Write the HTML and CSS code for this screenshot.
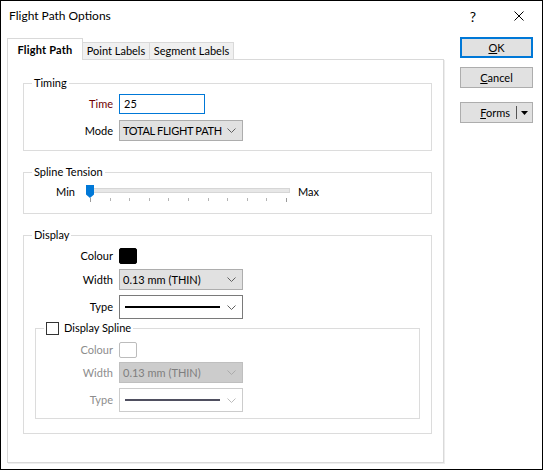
FILE: index.html
```html
<!DOCTYPE html>
<html>
<head>
<meta charset="utf-8">
<link rel="stylesheet" href="styles.css">
</head>
<body>
<div class="window">
  <div class="titlebar">
    <span class="title">Flight Path Options</span>
    <div class="caps">
      <span class="cap help">?</span>
      <span class="cap close"><svg width="10" height="10" viewBox="0 0 10 10"><path d="M0.5 0.5 L9.5 9.5 M9.5 0.5 L0.5 9.5" stroke="#000" stroke-width="1" fill="none"/></svg></span>
    </div>
  </div>
  <div class="body">
    <div class="main">
      <div class="tabs">
        <div class="tab active">Flight Path</div>
        <div class="tab t-point">Point Labels</div>
        <div class="tab t-seg">Segment Labels</div>
      </div>
      <div class="panel">
        <fieldset class="group timing">
          <legend>Timing</legend>
          <div class="form">
            <span class="lbl req">Time</span>
            <div class="textbox">25</div>
            <span class="lbl r-mode">Mode</span>
            <div class="combo r-mode"><span class="tight">TOTAL FLIGHT PATH</span><svg class="chev" width="9" height="5" viewBox="0 0 9 5"><polyline points="0.5,0.5 4.5,4.5 8.5,0.5" fill="none" stroke="#606060" stroke-width="1"/></svg></div>
          </div>
        </fieldset>

        <fieldset class="group spline-tension">
          <legend>Spline Tension</legend>
          <div class="slider-row">
            <span class="min">Min</span>
            <div class="slider">
              <div class="track"></div>
              <div class="ticks">
                <i class="tk tall"></i><i class="tk"></i><i class="tk"></i><i class="tk"></i><i class="tk"></i><i class="tk"></i><i class="tk"></i><i class="tk"></i><i class="tk"></i><i class="tk"></i><i class="tk tall"></i>
              </div>
              <svg class="thumb" width="8" height="13" viewBox="0 0 8 13"><path d="M0 0 H8 V9.5 L4 13 L0 9.5 Z" fill="#0078d7"/></svg>
            </div>
            <span class="max">Max</span>
          </div>
        </fieldset>

        <fieldset class="group display">
          <legend>Display</legend>
          <div class="form">
            <span class="lbl r-colour">Colour</span>
            <div class="r-colour cell"><span class="swatch"></span></div>
            <span class="lbl r-width">Width</span>
            <div class="combo r-width"><span>0.13 mm (THIN)</span><svg class="chev" width="9" height="5" viewBox="0 0 9 5"><polyline points="0.5,0.5 4.5,4.5 8.5,0.5" fill="none" stroke="#606060" stroke-width="1"/></svg></div>
            <span class="lbl r-type">Type</span>
            <div class="linecombo r-type"><span class="line"></span><svg class="chev" width="9" height="5" viewBox="0 0 9 5"><polyline points="0.5,0.5 4.5,4.5 8.5,0.5" fill="none" stroke="#606060" stroke-width="1"/></svg></div>
          </div>

          <fieldset class="group spline">
            <legend><span class="check"></span><span>Display Spline</span></legend>
            <div class="form sub">
              <span class="lbl dis r-colour2">Colour</span>
              <div class="r-colour2 cell"><span class="swatch off"></span></div>
              <span class="lbl dis r-width2">Width</span>
              <div class="combo off r-width2"><span>0.13 mm (THIN)</span><svg class="chev" width="9" height="5" viewBox="0 0 9 5"><polyline points="0.5,0.5 4.5,4.5 8.5,0.5" fill="none" stroke="#ababab" stroke-width="1"/></svg></div>
              <span class="lbl dis r-type2">Type</span>
              <div class="linecombo off r-type2"><span class="line"></span><svg class="chev" width="9" height="5" viewBox="0 0 9 5"><polyline points="0.5,0.5 4.5,4.5 8.5,0.5" fill="none" stroke="#bcbcbc" stroke-width="1"/></svg></div>
            </div>
          </fieldset>
        </fieldset>
      </div>
    </div>

    <div class="buttons">
      <div class="btn default"><span><u>O</u>K</span></div>
      <div class="btn cancel"><span><u>C</u>ancel</span></div>
      <div class="btn split">
        <span class="split-label"><u>F</u>orms</span>
        <span class="split-sep"></span>
        <span class="split-arrow"><svg width="7" height="4" viewBox="0 0 7 4"><path d="M0 0 H7 L3.5 4 Z" fill="#000"/></svg></span>
      </div>
    </div>
  </div>
</div>
</body>
</html>
```

FILE: styles.css
```css
html, body {
  margin: 0;
  padding: 0;
  background: #fff;
}

body {
  font-family: Lato, "Noto Sans", "Liberation Sans", sans-serif;
  font-size: 11px;
  line-height: 16px;
  color: #000;
}

.window {
  width: 543px;
  height: 470px;
  box-sizing: border-box;
  border: 1px solid #000;
  background: #fff;
  display: flex;
  flex-direction: column;
}

/* title bar */
.titlebar {
  height: 30px;
  flex-shrink: 0;
  display: flex;
  align-items: center;
}

.title {
  flex: 1;
  padding-left: 8px;
  font-size: 12px;
  line-height: 16px;
}

.caps {
  display: flex;
  height: 100%;
}

.cap {
  width: 46px;
  height: 100%;
  display: flex;
  align-items: center;
  justify-content: center;
}

.help {
  font-size: 14px;
  padding-top: 1px;
  box-sizing: border-box;
}

/* body layout */
.body {
  flex: 1;
  display: flex;
  padding: 0 9px 0 6px;
}

.main {
  width: 437px;
  margin-top: 7px;
  display: flex;
  flex-direction: column;
}

/* tabs */
.tabs {
  display: flex;
  align-items: flex-end;
  height: 21px;
  position: relative;
  z-index: 1;
}

.tab {
  box-sizing: border-box;
  text-align: center;
  background: #f0f0f0;
  border-top: 1px solid #d9d9d9;
  border-right: 1px solid #d9d9d9;
  height: 17px;
  line-height: 15px;
}

.tab.active {
  width: 76px;
  height: 22px;
  margin-bottom: -1px;
  background: #fff;
  border: 1px solid #d9d9d9;
  border-bottom: none;
  font-weight: bold;
  padding-top: 3px;
  line-height: 16px;
  letter-spacing: 0.2px;
}

.t-point {
  width: 67px;
}

.t-seg {
  width: 84px;
}

/* panel */
.panel {
  box-sizing: border-box;
  height: 404px;
  border: 1px solid #d9d9d9;
  box-shadow: 1px 1px 0 #ededed;
  padding: 15px 11px 0 15px;
  background: #fff;
}

/* group boxes */
.group {
  margin: 0;
  padding: 0;
  min-width: 0;
  border: 1px solid #dcdcdc;
}

.group > legend {
  padding: 0 2px;
  margin-left: 8px;
  line-height: 16px;
}

.timing {
  padding-top: 3px;
  padding-bottom: 9px;
}

.spline-tension {
  margin-top: 13px;
  padding-top: 4px;
  padding-bottom: 11px;
}

.display {
  margin-top: 13px;
  padding-top: 2px;
  padding-bottom: 14px;
}

.spline {
  margin: 1px 11px 0 11px;
  padding-top: 4px;
  padding-bottom: 6px;
}

.spline > legend {
  display: flex;
  align-items: center;
}

.check {
  width: 13px;
  height: 13px;
  box-sizing: border-box;
  border: 1px solid #333;
  background: #fff;
  margin-right: 5px;
}

/* forms */
.form {
  display: grid;
  grid-template-columns: 89px 123px;
  column-gap: 6px;
  align-items: center;
}

.form.sub {
  grid-template-columns: 77px 123px;
}

.lbl {
  text-align: right;
}

.req {
  color: #6e0000;
}

.dis {
  color: #8d8d8d;
}

.textbox {
  box-sizing: border-box;
  width: 86px;
  height: 20px;
  border: 1px solid #0078d7;
  padding-left: 4px;
  line-height: 18px;
  background: #fff;
}

.combo {
  box-sizing: border-box;
  width: 124px;
  height: 21px;
  border: 1px solid #adadad;
  background: #e1e1e1;
  display: flex;
  align-items: center;
  justify-content: space-between;
  padding: 0 6px 0 3px;
}

.tight {
  letter-spacing: -0.3px;
}

.combo.off {
  background: #cccccc;
  border-color: #bfbfbf;
  color: #7e7e7e;
}

.linecombo {
  box-sizing: border-box;
  width: 124px;
  height: 24px;
  border: 1px solid #7a7a7a;
  background: #fff;
  display: flex;
  align-items: center;
  justify-content: space-between;
  padding: 0 6px 0 5px;
}

.linecombo .line {
  width: 95px;
  height: 2px;
  background: #000;
}

.linecombo.off {
  border-color: #cccccc;
}

.linecombo.off .line {
  background: #4f4f60;
}

.chev {
  display: block;
  flex-shrink: 0;
}

.r-mode {
  margin-top: 6px;
}

.cell {
  height: 21px;
  display: flex;
  align-items: center;
}

.r-colour2.cell {
  height: 20px;
}

.r-width {
  margin-top: 3px;
}

.r-type {
  margin-top: 5px;
}

.r-width2 {
  margin-top: 2px;
}

.r-type2 {
  margin-top: 5px;
}

.swatch {
  display: block;
  width: 18px;
  height: 16px;
  box-sizing: border-box;
  border-radius: 2px;
  background: #000;
  border: 1px solid #000;
}

.swatch.off {
  background: #fff;
  border-color: #bcbcbc;
}

/* slider */
.slider-row {
  display: flex;
  height: 18px;
}

.min {
  width: 51px;
  text-align: right;
}

.slider {
  position: relative;
  width: 204px;
  margin-left: 11px;
}

.track {
  box-sizing: border-box;
  margin: 4px 0 0 1px;
  width: 203px;
  height: 5px;
  background: #e7e7e7;
  border: 1px solid #d6d6d6;
}

.ticks {
  display: flex;
  justify-content: space-between;
  align-items: flex-start;
  margin-top: 5px;
  padding: 0 3px 0 4px;
}

.tk {
  display: block;
  width: 1px;
  height: 3px;
  background: #b4b4b4;
}

.tk.tall {
  height: 4px;
  background: #9a9a9a;
}

.thumb {
  position: absolute;
  left: 0;
  top: 1px;
}

.max {
  margin-left: 8px;
}

/* buttons */
.buttons {
  width: 73px;
  margin-left: 16px;
  margin-top: 6px;
  display: flex;
  flex-direction: column;
}

.btn {
  box-sizing: border-box;
  height: 21px;
  border: 1px solid #adadad;
  background: #e1e1e1;
  display: flex;
  align-items: center;
  justify-content: center;
}

.btn.default {
  border: 2px solid #0078d7;
}

.btn.cancel {
  margin-top: 9px;
}

.btn.split {
  margin-top: 14px;
  justify-content: flex-end;
  padding-right: 4px;
}

.split-label {
  margin-right: 6px;
}

.split-sep {
  width: 1px;
  height: 13px;
  background: #555;
}

.split-arrow {
  display: flex;
  margin-left: 4px;
}
```
